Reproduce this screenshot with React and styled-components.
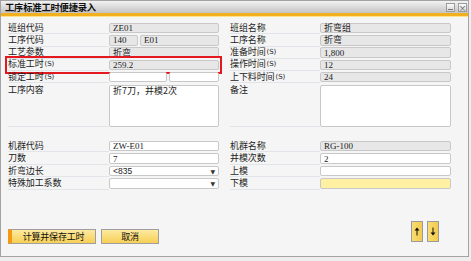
import React from 'react'
import styled, { createGlobalStyle } from 'styled-components'

const Global = createGlobalStyle`
  html, body { margin: 0; padding: 0; background: #eeeeee; }
  body { font-family: "Noto Sans CJK SC", "Noto Sans", sans-serif; }
`;

const Window = styled.div`
  width: 467px;
  height: 255px;
  border: 1px solid #a3a3a3;
  background: #f5f5f5;
  display: flex;
  flex-direction: column;
`;

const TitleBar = styled.div`
  height: 12px;
  background: linear-gradient(#f2f2f2, #c4c4c4);
  border-bottom: 3px solid #f2b01e;
  box-shadow: 0 1px 0 #fbe38a;
  display: flex;
  align-items: center;
  justify-content: space-between;
  padding: 0 1px 0 4px;
`;

const Title = styled.span`
  font-size: 9.3px;
  font-weight: 700;
  color: #111;
  line-height: 11px;
  letter-spacing: -0.2px;
`;

const WinButtons = styled.div`
  display: flex;
  gap: 3px;
`;

const WinButton = styled.div`
  box-sizing: border-box;
  width: 9px;
  height: 9px;
  border: 1px solid #9c9c9c;
  background: linear-gradient(#fbfbfb, #d6d6d6);
  display: flex;
  align-items: ${p => (p.$bar ? 'flex-end' : 'center')};
  justify-content: center;
  font-size: 8px;
  line-height: 7px;
  color: #555;
`;

const Bar = styled.div`
  width: 5px;
  height: 1px;
  margin-bottom: 1px;
  background: #777;
`;

const Body = styled.div`
  flex: 1;
  display: flex;
  flex-direction: column;
  padding: 6px 17px 12px 7px;
`;

const Columns = styled.div`
  display: flex;
  gap: 11px;
  margin-top: ${p => p.$top || 0}px;
`;

const Column = styled.div`
  display: flex;
  flex-direction: column;
  flex: 0 0 ${p => p.$w}px;
`;

const Row = styled.div`
  display: grid;
  grid-template-columns: ${p => p.$label}px 1fr;
  height: ${p => p.$h || 12.25}px;
  align-items: ${p => (p.$tall ? 'start' : 'center')};
  outline: ${p => (p.$marked ? '2px solid #e3191f' : 'none')};
  outline-offset: 1px;
`;

const Label = styled.div`
  height: 100%;
  box-sizing: border-box;
  border-bottom: 1px solid #e1e5ea;
  font-size: 9px;
  line-height: 10px;
  color: #1c1c1c;
  display: flex;
  align-items: ${p => (p.$tall ? 'flex-start' : 'center')};
  padding-top: ${p => (p.$tall ? 2 : 0)}px;
  white-space: nowrap;
  letter-spacing: -0.1px;
`;

const Unit = styled.span`
  font-family: "DejaVu Sans", sans-serif;
  font-size: 7px;
  line-height: 10px;
  margin-left: 1px;
`;

const fills = { gray: '#e7e7e7', white: '#ffffff', yellow: '#fff0a2' };

const Field = styled.div`
  box-sizing: border-box;
  height: ${p => p.$h || 10.5}px;
  margin-top: ${p => (p.$tall ? 1.5 : 0)}px;
  width: ${p => (p.$w ? `${p.$w}px` : 'auto')};
  background: ${p => fills[p.$fill || 'white']};
  border: 1px solid #c8c8c8;
  border-radius: 2px;
  font-family: "Liberation Serif", "Noto Sans CJK SC", serif;
  font-size: 9px;
  color: #222;
  padding: ${p => (p.$tall ? '1px 3px 0' : '0 3px')};
  display: flex;
  align-items: ${p => (p.$tall ? 'flex-start' : 'center')};
  justify-content: space-between;
  line-height: 8px;
  white-space: nowrap;
`;

const CJK = styled.span`
  font-family: "Noto Sans CJK SC", sans-serif;
  font-size: 9px;
  line-height: 8px;
`;

const Sans = styled.span`
  font-family: "Liberation Sans", sans-serif;
  font-size: 8.5px;
  line-height: 8px;
`;

const Caret = styled.span`
  font-size: 6px;
  line-height: 7px;
  color: #333;
  font-family: "DejaVu Sans", sans-serif;
`;

const Pair = styled.div`
  display: flex;
  gap: 2px;
`;

const Footer = styled.div`
  margin-top: auto;
  padding-right: 12px;
  display: flex;
  justify-content: space-between;
  align-items: flex-end;
`;

const Buttons = styled.div`
  display: flex;
  gap: 5px;
`;

const Button = styled.div`
  box-sizing: border-box;
  width: ${p => p.$w}px;
  height: 15px;
  border: 1px solid #9f9f9f;
  border-left: ${p => (p.$primary ? '4px solid #f29a11' : '1px solid #9f9f9f')};
  background: linear-gradient(#fdeaa0, #f6cf55);
  font-size: 9px;
  line-height: 11px;
  color: #111;
  display: flex;
  align-items: center;
  justify-content: center;
  letter-spacing: -0.2px;
`;

const Arrows = styled.div`
  display: flex;
  gap: 4px;
  margin-bottom: 2px;
`;

const ArrowButton = styled.div`
  box-sizing: border-box;
  width: 12px;
  height: 21px;
  border: 1px solid #9a9a9a;
  background: linear-gradient(90deg, #f9dc73, #f3cb4d);
  display: flex;
  align-items: center;
  justify-content: center;
`;

const Arrow = ({ down }) => (
  <svg width="6" height="9" viewBox="0 0 6 9">
    <g transform={down ? 'rotate(180 3 4.5)' : undefined} fill="#111">
      <path d="M3 0.5 L5.5 3.5 L0.5 3.5 Z" />
      <rect x="2.5" y="3" width="1" height="5.5" />
    </g>
  </svg>
);

const L = 101;
const R = 90;

export default function App() {
  return (
    <>
      <Global />
      <Window>
        <TitleBar>
          <Title>工序标准工时便捷录入</Title>
          <WinButtons>
            <WinButton $bar><Bar /></WinButton>
            <WinButton>×</WinButton>
          </WinButtons>
        </TitleBar>
        <Body>
          <Columns>
            <Column $w={211}>
              <Row $label={L}>
                <Label>班组代码</Label>
                <Field $fill="gray">ZE01</Field>
              </Row>
              <Row $label={L}>
                <Label>工序代码</Label>
                <Pair>
                  <Field $fill="gray" $w={29}>140</Field>
                  <Field $fill="gray" $w={79}>E01</Field>
                </Pair>
              </Row>
              <Row $label={L}>
                <Label>工艺参数</Label>
                <Field $fill="gray"><CJK>折弯</CJK></Field>
              </Row>
              <Row $label={L} $marked>
                <Label>标准工时<Unit>(S)</Unit></Label>
                <Field $fill="gray">259.2</Field>
              </Row>
              <Row $label={L}>
                <Label>锁定工时<Unit>(S)</Unit></Label>
                <Pair>
                  <Field $w={58} />
                  <Field $w={50} />
                </Pair>
              </Row>
              <Row $label={L} $h={44} $tall>
                <Label $tall>工序内容</Label>
                <Field $h={42} $tall><CJK>折7刀，并模2次</CJK></Field>
              </Row>
            </Column>
            <Column $w={221}>
              <Row $label={R}>
                <Label>班组名称</Label>
                <Field $fill="gray"><CJK>折弯组</CJK></Field>
              </Row>
              <Row $label={R}>
                <Label>工序名称</Label>
                <Field $fill="gray"><CJK>折弯</CJK></Field>
              </Row>
              <Row $label={R}>
                <Label>准备时间<Unit>(S)</Unit></Label>
                <Field $fill="gray">1,800</Field>
              </Row>
              <Row $label={R}>
                <Label>操作时间<Unit>(S)</Unit></Label>
                <Field $fill="gray">12</Field>
              </Row>
              <Row $label={R}>
                <Label>上下料时间<Unit>(S)</Unit></Label>
                <Field $fill="gray">24</Field>
              </Row>
              <Row $label={R} $h={44} $tall>
                <Label $tall>备注</Label>
                <Field $h={42} $tall />
              </Row>
            </Column>
          </Columns>

          <Columns $top={12.5}>
            <Column $w={211}>
              <Row $label={L} $h={12.5}>
                <Label>机群代码</Label>
                <Field>ZW-E01</Field>
              </Row>
              <Row $label={L} $h={12.5}>
                <Label>刀数</Label>
                <Field>7</Field>
              </Row>
              <Row $label={L} $h={12.5}>
                <Label>折弯边长</Label>
                <Field><Sans>&lt;835</Sans><Caret>▼</Caret></Field>
              </Row>
              <Row $label={L} $h={12.5}>
                <Label>特殊加工系数</Label>
                <Field><span /><Caret>▼</Caret></Field>
              </Row>
            </Column>
            <Column $w={221}>
              <Row $label={R} $h={12.5}>
                <Label>机群名称</Label>
                <Field $fill="gray">RG-100</Field>
              </Row>
              <Row $label={R} $h={12.5}>
                <Label>并模次数</Label>
                <Field>2</Field>
              </Row>
              <Row $label={R} $h={12.5}>
                <Label>上模</Label>
                <Field />
              </Row>
              <Row $label={R} $h={12.5}>
                <Label>下模</Label>
                <Field $fill="yellow" />
              </Row>
            </Column>
          </Columns>

          <Footer>
            <Buttons>
              <Button $w={88} $primary>计算并保存工时</Button>
              <Button $w={58}>取消</Button>
            </Buttons>
            <Arrows>
              <ArrowButton><Arrow /></ArrowButton>
              <ArrowButton><Arrow down /></ArrowButton>
            </Arrows>
          </Footer>
        </Body>
      </Window>
    </>
  )
}
